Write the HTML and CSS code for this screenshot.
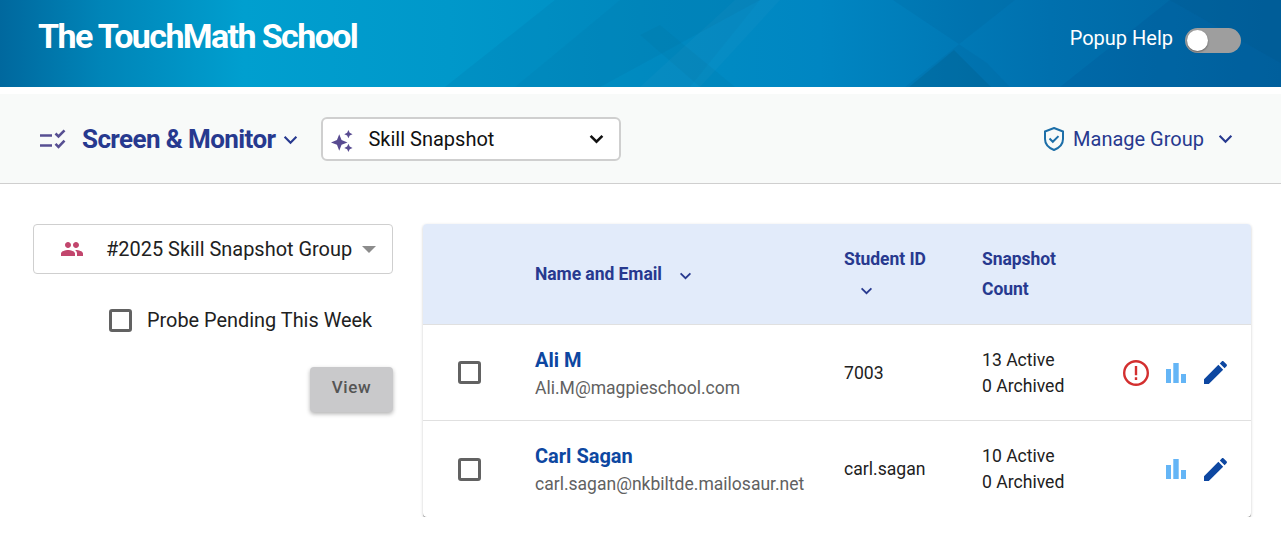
FILE: index.html
```html
<!DOCTYPE html>
<html lang="en">
<head>
    <meta charset="UTF-8">
    <meta name="viewport" content="width=device-width, initial-scale=1.0">
    <title>Screen &amp; Monitor</title>
    <link rel="stylesheet" href="styles.css">
</head>
<body>

    <header class="top-bar">
        <svg class="top-bar-art" viewBox="0 0 1281 87" preserveAspectRatio="none" aria-hidden="true">
            <polygon points="445,87 555,0 760,0 600,87" fill="#00689a" opacity="0.13"/>
            <polygon points="515,87 620,0 760,0 690,87" fill="#00689a" opacity="0.1"/>
            <polygon points="640,35 700,87 735,87 660,25" fill="#006f96" opacity="0.12"/>
            <polygon points="640,87 735,0 780,0 700,87" fill="#ffffff" opacity="0.025"/>
            <polygon points="905,87 1015,0 893,0 987,63 1010,87" fill="#004f80" opacity="0.1"/>
            <polygon points="909,87 954,50 991,87" fill="#004f70" opacity="0.18"/>
            <polygon points="1060,87 1170,0 1281,63 1281,87" fill="#00508f" opacity="0.18"/>
            <polygon points="1170,0 1281,0 1281,63" fill="#004f88" opacity="0.3"/>
        </svg>
        <h1 class="school-name">The TouchMath School</h1>
        <div class="popup-help">
            <span class="popup-label">Popup Help</span>
            <span class="switch"><span class="switch-knob"></span></span>
        </div>
    </header>

    <nav class="tool-bar">
        <svg class="list-check-icon" viewBox="0 0 28 20" aria-hidden="true">
            <path d="M1 6.500h12M1 16.500h12" stroke="#574f92" stroke-width="2.600" fill="none"/>
            <path d="M16.500 4.500l3 3 6-6.200M16.500 14.800l3 3 6-6.200" stroke="#574f92" stroke-width="2.600" fill="none"/>
        </svg>
        <span class="module-title">Screen &amp; Monitor</span>
        <svg class="chevron module-chevron" viewBox="0 0 14 9" aria-hidden="true"><path d="M1.500 1.500L7 7l5.500-5.500"/></svg>

        <div class="snapshot-select">
            <svg class="sparkle-icon" viewBox="0 0 24 24" aria-hidden="true">
                <path d="M9 4.500l2.500 6.500L18 13.500l-6.500 2.500L9 22.500 6.500 16 0 13.500 6.500 11z"/>
                <path d="M19 0l1.400 3.100 3.100 1.400-3.100 1.400L19 9l-1.400-3.100-3.100-1.400 3.100-1.400z"/>
                <path d="M19 15l1.400 3.100 3.100 1.400-3.100 1.400L19 24l-1.400-3.100-3.100-1.400 3.100-1.400z"/>
            </svg>
            <span class="snapshot-label">Skill Snapshot</span>
            <svg class="chevron snapshot-chevron" viewBox="0 0 14 9" aria-hidden="true"><path d="M1.500 1.500L7 7l5.500-5.500"/></svg>
        </div>

        <div class="manage-group">
            <svg class="shield-icon" viewBox="0 0 20 24" aria-hidden="true">
                <path d="M10 1L19 4.500v7.500c0 5-3.500 8.800-9 11-5.500-2.200-9-6-9-11V4.500z"/>
                <path d="M5.500 11.500l3.300 3.300 5.700-5.700"/>
            </svg>
            <span>Manage Group</span>
            <svg class="chevron manage-chevron" viewBox="0 0 14 9" aria-hidden="true"><path d="M1.500 1.500L7 7l5.500-5.500"/></svg>
        </div>
    </nav>

    <main class="content">
        <aside class="filters">
            <div class="group-select">
                <svg class="people-icon" viewBox="0 0 24 24" aria-hidden="true">
                    <path d="M16 11c1.660 0 2.990-1.340 2.990-3S17.660 5 16 5s-3 1.340-3 3 1.340 3 3 3zm-8 0c1.660 0 2.990-1.340 2.990-3S9.660 5 8 5 5 6.340 5 8s1.340 3 3 3zm0 2c-2.330 0-7 1.170-7 3.500V19h14v-2.500c0-2.330-4.670-3.500-7-3.500zm8 0c-.29 0-.62.02-.97.05 1.160.84 1.970 1.970 1.970 3.450V19h6v-2.500c0-2.330-4.670-3.500-7-3.500z"/>
                </svg>
                <span class="group-label">#2025 Skill Snapshot Group</span>
                <span class="caret"></span>
            </div>
            <label class="pending-check">
                <span class="check-box"></span>
                <span>Probe Pending This Week</span>
            </label>
            <button type="button" class="view-btn">View</button>
        </aside>

        <div class="student-card">
            <div class="student-row student-head">
                <div></div>
                <div class="head-name">
                    <span>Name and Email</span>
                    <svg class="chevron head-chevron" viewBox="0 0 14 9" aria-hidden="true"><path d="M1.500 1.500L7 7l5.500-5.500"/></svg>
                </div>
                <div class="head-stack">
                    <span>Student ID</span>
                    <svg class="chevron head-chevron id-chevron" viewBox="0 0 14 9" aria-hidden="true"><path d="M1.500 1.500L7 7l5.500-5.500"/></svg>
                </div>
                <div class="head-count">Snapshot<br>Count</div>
                <div></div>
            </div>

            <div class="student-row">
                <div class="check-cell"><span class="check-box"></span></div>
                <div>
                    <div class="student-name">Ali M</div>
                    <div class="student-email">Ali.M@magpieschool.com</div>
                </div>
                <div class="student-id">7003</div>
                <div class="student-count">13 Active<br>0 Archived</div>
                <div class="actions">
                    <svg class="alert-icon" viewBox="0 0 24 24" aria-hidden="true">
                        <circle cx="12" cy="12" r="10.900"/>
                        <path d="M12 5.500v8.500M12 16v2.500"/>
                    </svg>
                    <svg class="bars-icon" viewBox="0 0 20 20" aria-hidden="true">
                        <path d="M0 6h5v14H0zM7.300 0h5.400v20H7.300zM15 11h5v9h-5z"/>
                    </svg>
                    <svg class="pencil-icon" viewBox="0 0 24 24" aria-hidden="true">
                        <path d="M0 24v-5L15 4l5 5L5 24zM16.500 2.500L18.500.5c.6-.6 1.400-.6 2 0l3 3c.6.6.6 1.400 0 2l-2 2z"/>
                    </svg>
                </div>
            </div>

            <div class="student-row">
                <div class="check-cell"><span class="check-box"></span></div>
                <div>
                    <div class="student-name">Carl Sagan</div>
                    <div class="student-email">carl.sagan@nkbiltde.mailosaur.net</div>
                </div>
                <div class="student-id">carl.sagan</div>
                <div class="student-count">10 Active<br>0 Archived</div>
                <div class="actions">
                    <svg class="bars-icon" viewBox="0 0 20 20" aria-hidden="true">
                        <path d="M0 6h5v14H0zM7.300 0h5.400v20H7.300zM15 11h5v9h-5z"/>
                    </svg>
                    <svg class="pencil-icon" viewBox="0 0 24 24" aria-hidden="true">
                        <path d="M0 24v-5L15 4l5 5L5 24zM16.500 2.500L18.500.5c.6-.6 1.400-.6 2 0l3 3c.6.6.6 1.400 0 2l-2 2z"/>
                    </svg>
                </div>
            </div>
        </div>
    </main>

</body>
</html>
```

FILE: styles.css
```css
* {
    box-sizing: border-box;
}

body {
    font-family: 'Roboto', sans-serif;
    margin: 0;
    padding: 0;
    background-color: #fff;
    color: #212121;
}

.top-bar {
    position: relative;
    height: 87px;
    display: flex;
    align-items: flex-start;
    justify-content: space-between;
    padding: 0 40px 0 38px;
    overflow: hidden;
    background: linear-gradient(90deg, #00689e 0%, #0085b8 8%, #009fcf 19%, #0098ca 35%, #008ec4 50%, #0086c2 64%, #0070ae 82%, #00639f 100%);
}

.top-bar-art {
    position: absolute;
    left: 0;
    top: 0;
    width: 100%;
    height: 100%;
}

.school-name {
    position: relative;
    margin: 17px 0 0;
    font-size: 34px;
    line-height: 38px;
    font-weight: 700;
    letter-spacing: -1.600px;
    color: #fff;
}

.popup-help {
    position: relative;
    display: flex;
    align-items: center;
    gap: 11px;
    margin-top: 25px;
    font-size: 20px;
    line-height: 24px;
    color: #fff;
}

.popup-label {
    margin: 0 1px 2px -1px;
}

.popup-help .switch {
    margin-top: 3px;
}

.switch {
    display: block;
    width: 56px;
    height: 25px;
    padding: 2px;
    border-radius: 13px;
    background-color: #9e9e9e;
}

.switch-knob {
    display: block;
    width: 21px;
    height: 21px;
    border-radius: 50%;
    background-color: #fff;
    box-shadow: 0 1px 2px rgba(0, 0, 0, 0.4);
}

.tool-bar {
    display: flex;
    align-items: center;
    height: 90px;
    margin-top: 7px;
    padding: 0 48px 0 39px;
    background-color: #f8faf9;
    border-bottom: 1px solid #cfcfcf;
}

.chevron {
    display: block;
    fill: none;
    stroke: #27398f;
    stroke-width: 2;
}

.list-check-icon {
    width: 28px;
    height: 20px;
}

.module-title {
    margin-left: 15px;
    font-size: 26px;
    font-weight: 700;
    letter-spacing: -0.600px;
    color: #27398f;
}

.module-chevron {
    width: 15px;
    height: 10px;
    margin: 2px 0 0 8px;
}

.snapshot-select {
    display: flex;
    align-items: center;
    width: 300px;
    height: 44px;
    margin-left: 23px;
    padding: 0 15px 0 8px;
    background-color: #fff;
    border: 2px solid #cfcfcf;
    border-radius: 6px;
}

.sparkle-icon {
    width: 22px;
    height: 22px;
    margin-top: 4px;
    fill: #584b91;
}

.snapshot-label {
    flex: 1;
    margin-left: 15px;
    font-size: 20px;
    color: #111;
}

.snapshot-chevron {
    stroke: #111;
    stroke-width: 2.400;
    width: 15px;
    height: 10px;
}

.manage-group {
    display: flex;
    align-items: center;
    margin-left: auto;
    font-size: 20px;
    color: #27398f;
}

.shield-icon {
    width: 20px;
    height: 24px;
    margin-right: 9px;
    fill: none;
    stroke: #1c6ea8;
    stroke-width: 2;
}

.manage-chevron {
    width: 15px;
    height: 10px;
    margin-left: 14px;
}

.content {
    display: flex;
    align-items: flex-start;
    padding: 40px 30px 0 33px;
}

.filters {
    display: flex;
    flex-direction: column;
    width: 360px;
}

.group-select {
    display: flex;
    align-items: center;
    height: 50px;
    padding: 0 16px 0 26px;
    background-color: #fff;
    border: 1px solid #cfcfcf;
    border-radius: 4px;
}

.people-icon {
    width: 24px;
    height: 24px;
    fill: #c2466d;
}

.group-label {
    flex: 1;
    margin-left: 22px;
    font-size: 19.950px;
    white-space: nowrap;
}

.caret {
    width: 0;
    height: 0;
    border-left: 7px solid transparent;
    border-right: 7px solid transparent;
    border-top: 7px solid #8c8c8c;
}

.pending-check {
    display: flex;
    align-items: center;
    gap: 15px;
    margin: 35px 0 0 76px;
    font-size: 19.900px;
    white-space: nowrap;
}

.check-box {
    display: block;
    width: 23px;
    height: 23px;
    border: 3px solid #626262;
    border-radius: 3px;
    background-color: #fff;
}

.view-btn {
    align-self: flex-end;
    width: 83px;
    height: 45px;
    margin: 35px 0 0;
    padding: 0 0 5px;
    font-family: inherit;
    font-size: 17px;
    font-weight: 500;
    letter-spacing: 0.600px;
    color: #555;
    background-color: #c9c9cb;
    border: none;
    border-radius: 4px;
    box-shadow: 0 2px 4px rgba(0, 0, 0, 0.3);
    cursor: pointer;
}

.student-card {
    flex: 1;
    margin-left: 30px;
    background-color: #fff;
    border-radius: 4px;
    box-shadow: 0 1px 0 rgba(0, 0, 0, 0.35), 0 1px 3px rgba(0, 0, 0, 0.22);
    overflow: hidden;
}

.student-row {
    display: grid;
    grid-template-columns: 112px 309px 138px 130px 1fr;
    align-items: center;
    height: 96px;
    border-top: 1px solid #e0e0e0;
}

.student-row:last-child {
    height: 97px;
}

.student-head {
    height: 100px;
    border-top: none;
    background-color: #e2ebfa;
    font-size: 17.500px;
    font-weight: 700;
    letter-spacing: -0.060px;
    color: #27398f;
}

.head-name {
    display: flex;
    align-items: center;
    gap: 17px;
}

.head-chevron {
    width: 13px;
    height: 8px;
    margin-top: 3px;
}

.head-stack {
    display: flex;
    flex-direction: column;
    align-items: flex-start;
    gap: 18px;
    padding-bottom: 4px;
}

.id-chevron {
    margin: 0 0 0 16px;
}

.head-count {
    line-height: 30px;
}

.check-cell {
    padding-left: 35px;
}

.student-name {
    font-size: 20px;
    font-weight: 700;
    line-height: 28px;
    color: #0d47a1;
}

.student-email {
    margin: 1px 0 -1px;
    font-size: 17.550px;
    line-height: 26px;
    color: #616161;
}

.student-id {
    font-size: 17.600px;
}

.student-count {
    font-size: 17.600px;
    line-height: 26px;
}

.actions {
    display: flex;
    align-items: center;
    justify-content: flex-end;
    gap: 18px;
    padding-right: 24px;
}

.alert-icon {
    width: 26px;
    height: 26px;
    margin: 0 -1px;
    fill: none;
    stroke: #d32f2f;
    stroke-width: 2.200;
}

.bars-icon {
    width: 20px;
    height: 20px;
    fill: #64b5f6;
}

.pencil-icon {
    width: 23px;
    height: 23px;
    fill: #0d47a1;
}
```
